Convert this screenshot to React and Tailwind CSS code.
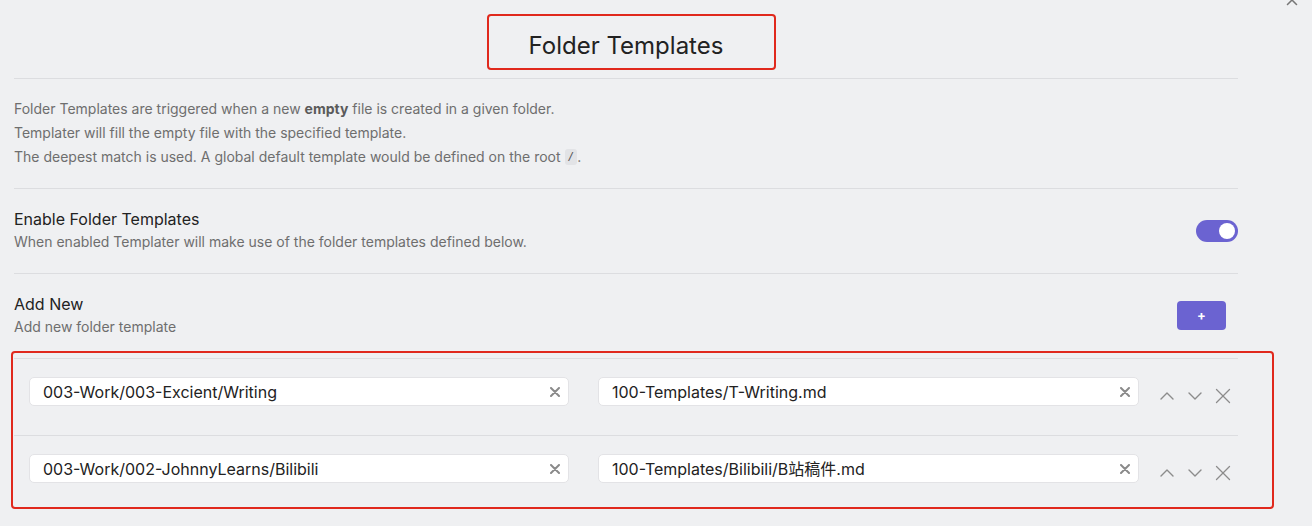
import { ChevronUp, ChevronDown, X } from "lucide-react";

const rows = [
  {
    folder: "003-Work/003-Excient/Writing",
    template: "100-Templates/T-Writing.md",
  },
  {
    folder: "003-Work/002-JohnnyLearns/Bilibili",
    template: "100-Templates/Bilibili/B站稿件.md",
  },
];

/* INPUT WITH CLEAR BUTTON */
function SearchInput({ value, className }) {
  return (
    <div
      className={`flex items-center h-[29px] bg-white border border-[#e3e3e6] rounded-[5px] pl-[13px] pr-[8px] ${className}`}
    >
      <span className="flex-1 text-[16px] leading-[20px] text-[#222222] whitespace-nowrap overflow-hidden">
        {value}
      </span>
      <svg width="10" height="10" viewBox="0 0 10 10" className="shrink-0">
        <path
          d="M1 1 9 9M9 1 1 9"
          stroke="#8a8a8a"
          strokeWidth="2"
          strokeLinecap="round"
        />
      </svg>
    </div>
  );
}

export default function App() {
  return (
    <div
      className="relative w-full h-[526px] overflow-hidden bg-[#eff0f2]"
      style={{ fontFamily: 'Inter, "Noto Sans CJK SC", sans-serif' }}
    >
      {/* MODAL CLOSE */}
      <div className="absolute right-[11px] top-[-9px] text-[#777777]">
        <X size={18} strokeWidth={2} />
      </div>

      <div className="ml-[14px] w-[1224px]">
        {/* TITLE */}
        <div className="h-[79px] pt-[14px] flex items-center justify-center border-b border-[#dcdde0]">
          <h1 className="text-[24px] leading-[30px] text-[#222222] font-normal">
            Folder Templates
          </h1>
        </div>

        {/* DESCRIPTION */}
        <div className="pt-[18px] pb-[19px] border-b border-[#dcdde0] text-[14px] text-[#6e6e6e]">
          <div className="h-[24px] leading-[24px]">
            Folder Templates are triggered when a new{" "}
            <b className="font-bold text-[#5a5a5a]">empty</b> file is created in
            a given folder.
          </div>
          <div className="h-[24px] leading-[24px]">
            Templater will fill the empty file with the specified template.
          </div>
          <div className="h-[24px] leading-[24px] flex items-center">
            <span>
              The deepest match is used. A global default template would be
              defined on the root
            </span>
            <code
              className="ml-[4px] inline-block h-[16px] leading-[16px] bg-[#e2e3e6] rounded-[3px] px-[3px] text-[11px] text-[#555555]"
              style={{ fontFamily: '"DejaVu Sans Mono", monospace' }}
            >
              /
            </code>
            <span>.</span>
          </div>
        </div>

        {/* ENABLE */}
        <div className="flex items-center pt-[20px] pb-[22px] border-b border-[#dcdde0]">
          <div className="flex-1">
            <div className="text-[16px] leading-[20px] text-[#222222]">
              Enable Folder Templates
            </div>
            <div className="mt-[4px] text-[14px] leading-[18px] text-[#6e6e6e]">
              When enabled Templater will make use of the folder templates defined
              below.
            </div>
          </div>
          <div className="w-[42px] h-[22px] rounded-full bg-[#6b63d1] flex items-center justify-end pr-[3px] mt-[1px]">
            <div className="w-[16px] h-[16px] rounded-full bg-white" />
          </div>
        </div>

        {/* ADD NEW */}
        <div className="flex items-center pt-[20px] pb-[22px] border-b border-[#dcdde0]">
          <div className="flex-1">
            <div className="text-[16px] leading-[20px] text-[#222222]">Add New</div>
            <div className="mt-[4px] text-[14px] leading-[18px] text-[#6e6e6e]">
              Add new folder template
            </div>
          </div>
          <button className="w-[49px] h-[29px] mr-[12px] rounded-[4px] bg-[#6b63d1] text-white text-[13px] font-bold leading-none flex items-center justify-center">
            +
          </button>
        </div>

        {/* FOLDER ROWS */}
        {rows.map((row, i) => (
          <div
            key={row.folder}
            className={`flex items-start pl-[15px] pt-[18px] pb-[25px] ${
              i === 0 ? "border-b border-[#dcdde0]" : ""
            }`}
          >
            <SearchInput value={row.folder} className="w-[540px]" />
            <SearchInput value={row.template} className="w-[541px] ml-[29px]" />
            <div className="flex items-center ml-[14px] mt-[5px] text-[#8c8c8c]">
              <div className="w-[28px] h-[28px] flex items-center justify-center">
                <ChevronUp size={24} strokeWidth={1.4} />
              </div>
              <div className="w-[28px] h-[28px] flex items-center justify-center">
                <ChevronDown size={24} strokeWidth={1.4} />
              </div>
              <div className="w-[28px] h-[28px] flex items-center justify-center">
                <X size={26} strokeWidth={1.2} />
              </div>
            </div>
          </div>
        ))}
      </div>

      {/* ANNOTATIONS */}
      <div className="absolute left-[487px] top-[14px] w-[289px] h-[56px] border-2 border-[#e0291d] rounded-[4px]" />
      <div className="absolute left-[11px] top-[351px] w-[1263px] h-[158px] border-2 border-[#e0291d] rounded-[4px]" />
    </div>
  );
}
